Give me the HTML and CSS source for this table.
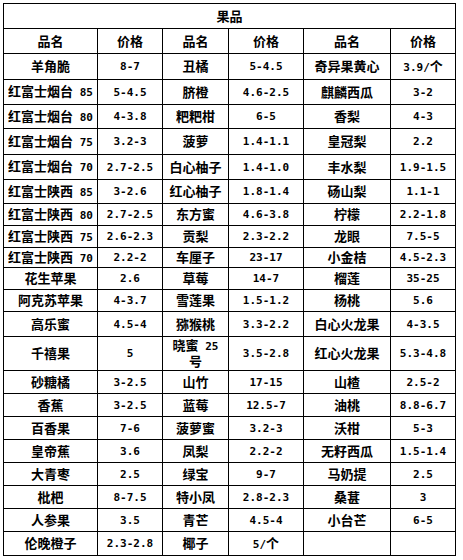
FILE: index.html
```html
<!DOCTYPE html>
<html lang="zh-CN">
<head>
<meta charset="utf-8">
<title>果品</title>
<link rel="stylesheet" href="styles.css">
</head>
<body>
<table class="sheet">
  <colgroup>
    <col class="c1"><col class="c2"><col class="c3"><col class="c4"><col class="c5"><col class="c6">
  </colgroup>
  <tbody>
    <tr class="h25"><td colspan="6">果品</td></tr>
    <tr class="h25"><td>品名</td><td>价格</td><td>品名</td><td>价格</td><td>品名</td><td>价格</td></tr>
    <tr class="h26"><td>羊角脆</td><td class="n">8-7</td><td>丑橘</td><td class="n">5-4.5</td><td>奇异果黄心</td><td class="n">3.9/<span class="z">个</span></td></tr>
    <tr class="h25"><td>红富士烟台<span class="n"> 85</span></td><td class="n">5-4.5</td><td>脐橙</td><td class="n">4.6-2.5</td><td>麒麟西瓜</td><td class="n">3-2</td></tr>
    <tr class="h24"><td>红富士烟台<span class="n"> 80</span></td><td class="n">4-3.8</td><td>粑粑柑</td><td class="n">6-5</td><td>香梨</td><td class="n">4-3</td></tr>
    <tr class="h26"><td>红富士烟台<span class="n"> 75</span></td><td class="n">3.2-3</td><td>菠萝</td><td class="n">1.4-1.1</td><td>皇冠梨</td><td class="n">2.2</td></tr>
    <tr class="h25"><td>红富士烟台<span class="n"> 70</span></td><td class="n">2.7-2.5</td><td>白心柚子</td><td class="n">1.4-1.0</td><td>丰水梨</td><td class="n">1.9-1.5</td></tr>
    <tr class="h24"><td>红富士陕西<span class="n"> 85</span></td><td class="n">3-2.6</td><td>红心柚子</td><td class="n">1.8-1.4</td><td>砀山梨</td><td class="n">1.1-1</td></tr>
    <tr class="h22"><td>红富士陕西<span class="n"> 80</span></td><td class="n">2.7-2.5</td><td>东方蜜</td><td class="n">4.6-3.8</td><td>柠檬</td><td class="n">2.2-1.8</td></tr>
    <tr class="h22"><td>红富士陕西<span class="n"> 75</span></td><td class="n">2.6-2.3</td><td>贡梨</td><td class="n">2.3-2.2</td><td>龙眼</td><td class="n">7.5-5</td></tr>
    <tr class="h20"><td>红富士陕西<span class="n"> 70</span></td><td class="n">2.2-2</td><td>车厘子</td><td class="n">23-17</td><td>小金桔</td><td class="n">4.5-2.3</td></tr>
    <tr class="h22"><td>花生苹果</td><td class="n">2.6</td><td>草莓</td><td class="n">14-7</td><td>榴莲</td><td class="n">35-25</td></tr>
    <tr class="h22"><td>阿克苏苹果</td><td class="n">4-3.7</td><td>雪莲果</td><td class="n">1.5-1.2</td><td>杨桃</td><td class="n">5.6</td></tr>
    <tr class="h25"><td>高乐蜜</td><td class="n">4.5-4</td><td>猕猴桃</td><td class="n">3.3-2.2</td><td>白心火龙果</td><td class="n">4-3.5</td></tr>
    <tr class="h34"><td>千禧果</td><td class="n">5</td><td>晓蜜<span class="n"> 25</span><br>号</td><td class="n">3.5-2.8</td><td>红心火龙果</td><td class="n">5.3-4.8</td></tr>
    <tr class="h23"><td>砂糖橘</td><td class="n">3-2.5</td><td>山竹</td><td class="n">17-15</td><td>山楂</td><td class="n">2.5-2</td></tr>
    <tr class="h23"><td>香蕉</td><td class="n">3-2.5</td><td>蓝莓</td><td class="n">12.5-7</td><td>油桃</td><td class="n">8.8-6.7</td></tr>
    <tr class="h23"><td>百香果</td><td class="n">7-6</td><td>菠萝蜜</td><td class="n">3.2-3</td><td>沃柑</td><td class="n">5-3</td></tr>
    <tr class="h23"><td>皇帝蕉</td><td class="n">3.6</td><td>凤梨</td><td class="n">2.2-2</td><td>无籽西瓜</td><td class="n">1.5-1.4</td></tr>
    <tr class="h23"><td>大青枣</td><td class="n">2.5</td><td>绿宝</td><td class="n">9-7</td><td>马奶提</td><td class="n">2.5</td></tr>
    <tr class="h23"><td>枇杷</td><td class="n">8-7.5</td><td>特小凤</td><td class="n">2.8-2.3</td><td>桑葚</td><td class="n">3</td></tr>
    <tr class="h23"><td>人参果</td><td class="n">3.5</td><td>青芒</td><td class="n">4.5-4</td><td>小台芒</td><td class="n">6-5</td></tr>
    <tr class="h24"><td>伦晚橙子</td><td class="n">2.3-2.8</td><td>椰子</td><td class="n">5/<span class="z">个</span></td><td></td><td></td></tr>
  </tbody>
</table>
</body>
</html>
```
FILE: styles.css
```css
html, body {
  margin: 0;
  padding: 0;
  background: #ffffff;
}

.sheet {
  margin: 3px 0 0 3px;
  border-collapse: collapse;
  table-layout: fixed;
  width: 453px;
  color: #000000;
  font-family: "DejaVu Sans Mono", "Noto Sans CJK SC", sans-serif;
  font-size: 13px;
  font-weight: 700;
}

.c1 { width: 94px; }
.c2 { width: 65px; }
.c3 { width: 66px; }
.c4 { width: 75px; }
.c5 { width: 87px; }
.c6 { width: 65px; }

.sheet td {
  border: 1px solid #000000;
  padding: 0 2px;
  text-align: center;
  vertical-align: middle;
  line-height: 15px;
  white-space: nowrap;
  overflow: hidden;
}

.sheet td.n,
.sheet .n {
  font-size: 11px;
}

.sheet .z {
  font-size: 13px;
}

.h20 { height: 20px; }
.h22 { height: 22px; }
.h23 { height: 23px; }
.h24 { height: 24px; }
.h25 { height: 25px; }
.h26 { height: 26px; }
.h34 { height: 34px; }
```
